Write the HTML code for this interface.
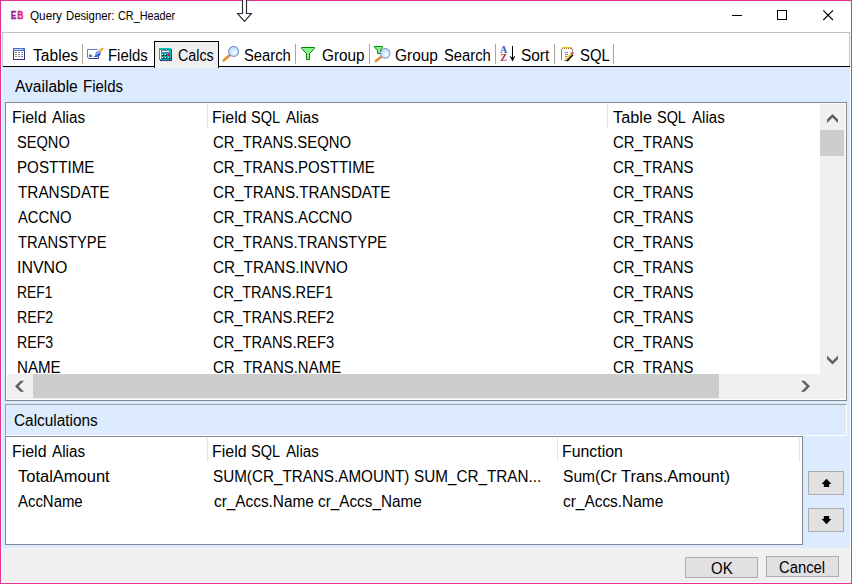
<!DOCTYPE html>
<html><head><meta charset="utf-8"><title>Query Designer: CR_Header</title>
<style>
html,body{margin:0;padding:0;}
body{width:852px;height:584px;position:relative;overflow:hidden;background:#fff;font-family:"Liberation Sans",sans-serif;color:#000;}
.a{position:absolute;}
.t{position:absolute;white-space:nowrap;line-height:20px;transform-origin:0 50%;color:#000;}
.sep{position:absolute;top:44px;width:1px;height:20px;background:#aaa799;}
.btn{position:absolute;background:#e1e1e1;border:1px solid #adadad;box-sizing:border-box;}
.cd{position:absolute;width:1px;height:24px;background:#e5e5e5;}
</style></head><body>
<!-- frame -->
<div class="a" style="left:0;top:0;width:850px;height:582px;border:1px solid #e1348f;"></div>
<div class="a" style="left:1px;top:1px;width:848px;height:580px;border:1px solid #f6faf8;"></div>
<!-- tab panel -->
<div class="a" style="left:2px;top:32px;width:846px;height:34px;border:1px solid #c3c3c3;border-bottom:none;background:#fff;"></div>
<!-- content bg -->
<div class="a" style="left:2px;top:67px;width:848px;height:481px;background:#dcebfd;"></div>
<!-- bottom bar -->
<div class="a" style="left:2px;top:548px;width:848px;height:34px;background:#f0f0f0;"></div>
<!-- black tab line -->
<div class="a" style="left:3px;top:66px;width:847px;height:1px;background:#000;"></div>
<!-- active tab -->
<div class="a" style="left:154px;top:41px;width:63px;height:26px;border:1px solid #000;border-bottom:none;background:#f0f0f0;"></div>
<!-- tab separators -->
<div class="sep" style="left:82px"></div>
<div class="sep" style="left:295px"></div>
<div class="sep" style="left:369px"></div>
<div class="sep" style="left:495px"></div>
<div class="sep" style="left:554px"></div>
<div class="sep" style="left:613px"></div>

<!-- title icons -->
<svg class="a" style="left:0;top:0" width="852" height="70" viewBox="0 0 852 70">
 <defs>
  <linearGradient id="eb" x1="0" x2="1" y1="0" y2="0"><stop offset="0" stop-color="#7a1fa8"/><stop offset="1" stop-color="#b01c90"/></linearGradient>
  <linearGradient id="eb2" x1="0" x2="1" y1="0" y2="0"><stop offset="0" stop-color="#c01c84"/><stop offset="1" stop-color="#ee2266"/></linearGradient>
  <radialGradient id="lens" cx="0.6" cy="0.65" r="0.7"><stop offset="0" stop-color="#ffffff"/><stop offset="0.5" stop-color="#c9ecff"/><stop offset="1" stop-color="#a5d8fb"/></radialGradient>
 </defs>
 <!-- cursor arrow -->
 <path d="M242.5,-1 V13.5 H237.5 L244.5,21.3 L251.5,13.5 H246.5 V-1" fill="#fff" stroke="#2b2b38" stroke-width="1.15"/>
 <!-- window buttons -->
 <rect x="732" y="15" width="10" height="1" fill="#000"/>
 <rect x="777.5" y="10.5" width="9" height="9" fill="none" stroke="#000" stroke-width="1"/>
 <path d="M823.3,10.3 L833,20 M833,10.3 L823.3,20" stroke="#000" stroke-width="1.1" fill="none"/>
 <!-- EB -->
 <g font-family="Liberation Sans" font-weight="bold" font-size="10.5" stroke-width="0.3">
  <text x="10.7" y="19" fill="url(#eb)" stroke="url(#eb)" textLength="5.6" lengthAdjust="spacingAndGlyphs">E</text>
  <text x="17.3" y="19" fill="url(#eb2)" stroke="url(#eb2)" textLength="6.2" lengthAdjust="spacingAndGlyphs">B</text>
 </g>

 <!-- Tables icon -->
 <g>
  <rect x="13" y="48" width="12" height="12" fill="#31307e"/>
  <rect x="13" y="48" width="12" height="3" fill="#4a72c8"/>
  <rect x="14" y="49" width="9" height="1" fill="#c8d8f4"/>
  <rect x="14" y="51" width="10" height="8" fill="#fff"/>
  <g fill="#8a8a8a"><rect x="15" y="52" width="2" height="1"/><rect x="18" y="52" width="2" height="1"/><rect x="21" y="52" width="2" height="1"/>
  <rect x="15" y="54" width="2" height="1"/><rect x="18" y="54" width="2" height="1" fill="#6a9a9a"/><rect x="21" y="54" width="2" height="1" fill="#6a9a9a"/>
  <rect x="15" y="56" width="2" height="1"/><rect x="18" y="56" width="2" height="1" fill="#6a9a9a"/><rect x="21" y="56" width="2" height="1" fill="#7a78b8"/></g>
 </g>
 <!-- Fields icon -->
 <g>
  <path d="M97.5,49.5 H87.5 V57.5 H88.5" fill="none" stroke="#5b7fd0" stroke-width="1"/>
  <path d="M88.5,58.5 H98.5 V56.5" fill="none" stroke="#3a3a8c" stroke-width="1"/>
  <rect x="89" y="54" width="2" height="1" fill="#7ccf7c"/>
  <rect x="89" y="55" width="3" height="2" fill="#4a78d8"/>
  <path d="M92.5,56.5 C95,56.8 96,55 95.5,53.5 C96,51.5 98.5,50.5 100,52 C101.5,53.5 100.5,56 98,56.8 C96,57.2 94,57 92.5,56.5Z" fill="#3a5fd4"/>
  <path d="M96.5,54.5 C97,53 98.5,52 99.5,52.8" stroke="#a8d4f4" stroke-width="1.2" fill="none"/>
  <path d="M99.9,51.6 L102.5,48.5" stroke="#e8a010" stroke-width="1.9" stroke-linecap="round"/>
  <path d="M98.4,50.4 L100.4,48.2" stroke="#9a6a3a" stroke-width="0.8" stroke-dasharray="0.8,0.6"/>
 </g>
 <!-- Calcs icon -->
 <g>
  <rect x="160" y="49" width="12" height="12" fill="#35358a"/>
  <rect x="159" y="48" width="12" height="12" fill="#08b5b5"/>
  <rect x="160" y="50" width="1" height="9" fill="#fff"/>
  <rect x="161" y="50" width="7" height="1" fill="#8a7a7a"/>
  <rect x="162" y="51" width="7" height="1" fill="#fff"/>
  <rect x="162" y="52" width="7" height="1" fill="#5a6ad0"/>
  <g fill="#111"><rect x="162.5" y="54.5" width="1.6" height="1.6"/><rect x="165.5" y="54.5" width="1.6" height="1.6"/>
  <rect x="162.5" y="57.5" width="1.6" height="1.6"/><rect x="165.5" y="57.5" width="1.6" height="1.6"/><rect x="168.5" y="57.5" width="1.6" height="1.6"/></g>
  <g fill="#fff"><rect x="162" y="54" width="1" height="1"/><rect x="165" y="54" width="1" height="1"/><rect x="162" y="57" width="1" height="1"/><rect x="165" y="57" width="1" height="1"/><rect x="168" y="57" width="1" height="1"/></g>
  <rect x="168" y="54" width="2" height="2" fill="#f00"/>
 </g>
 <!-- Search icon -->
 <g>
  <path d="M229.6,55.6 L223.8,60.6" stroke="#9a9ac8" stroke-width="2.6" stroke-linecap="round" opacity="0.6"/>
  <path d="M229.4,55.4 L223.7,60.3" stroke="#f08a24" stroke-width="2.3" stroke-linecap="round"/>
  <circle cx="233.6" cy="51.4" r="5" fill="url(#lens)" stroke="#8494cf" stroke-width="1.1"/>
 </g>
 <!-- Group (funnel) -->
 <path d="M301.5,47.5 H314.5 V48.5 L309.5,53.5 V59.5 H306.5 V53.5 L301.5,48.5 Z" fill="#8af08a" stroke="#008a00" stroke-width="1" stroke-linejoin="miter"/>
 <!-- Group Search icon -->
 <g>
  <path d="M374.5,46.5 H382.5 V47.5 L380.5,49.8 V53.5 H377.5 V49.8 L374.5,47.5 Z" fill="#8af08a" stroke="#008a00" stroke-width="1"/>
  <path d="M380.8,57.3 L375.8,61.3" stroke="#9a9ac8" stroke-width="2.4" stroke-linecap="round" opacity="0.6"/>
  <path d="M380.4,57.3 L375.8,61.1" stroke="#f08a24" stroke-width="2.2" stroke-linecap="round"/>
  <circle cx="385.2" cy="53.3" r="4.8" fill="url(#lens)" stroke="#8494cf" stroke-width="1.1"/>
 </g>
 <!-- Sort icon -->
 <g>
  <text x="500" y="52.8" font-family="Liberation Serif" font-weight="bold" font-size="10" fill="#3a5cc0">A</text>
  <text x="500.2" y="61" font-family="Liberation Serif" font-weight="bold" font-size="10" fill="#a83a3a">Z</text>
  <path d="M512.5,46 V60" stroke="#000" stroke-width="1"/>
  <path d="M510.1,56.2 L512.5,61.2 L514.9,56.2 L512.5,58 Z" fill="#000" stroke="#000" stroke-width="0.4"/>
 </g>
 <!-- SQL icon -->
 <g>
  <rect x="562" y="48" width="10" height="12" fill="#fff"/>
  <rect x="561" y="49" width="1" height="11" fill="#7878d0"/>
  <rect x="572" y="49" width="1" height="4" fill="#8a8a8a"/>
  <rect x="562" y="47" width="10" height="1" fill="#e8c020"/>
  <rect x="562" y="48" width="10" height="1" fill="#a86a30"/>
  <g fill="#fff"><rect x="563" y="48" width="1" height="1"/><rect x="565" y="48" width="1" height="1"/><rect x="567" y="48" width="1" height="1"/><rect x="569" y="48" width="1" height="1"/></g>
  <g fill="#8a8a8a"><rect x="565" y="52" width="3" height="1"/><rect x="565" y="54" width="3" height="1"/><rect x="565" y="56" width="2" height="1"/></g>
  <path d="M564,60.5 L570,60.5" stroke="#9a9a9a" stroke-width="1"/>
  <path d="M566.3,61 L572.8,54.5" stroke="#000" stroke-width="2.2" />
  <path d="M565.3,60 L571.8,53.5" stroke="#ecd040" stroke-width="2"/>
  <path d="M571.2,54.2 L573.2,52.2" stroke="#e05a6a" stroke-width="2.6"/>
 </g>
</svg>

<!-- list 1 -->
<div class="a" style="left:5px;top:102px;width:840px;height:297px;border:1px solid #828790;background:#fff;"></div>
<div class="a" style="left:6px;top:103px;width:814px;height:271px;overflow:hidden;">
<span class="t" style="left:10.96px;top:30.16px;font-size:16px;transform:scaleX(0.9130)">SEQNO</span>
<span class="t" style="left:207.29px;top:30.16px;font-size:16px;transform:scaleX(0.9302)">CR_TRANS.SEQNO</span>
<span class="t" style="left:607.04px;top:30.16px;font-size:16px;transform:scaleX(0.9316)">CR_TRANS</span>
<span class="t" style="left:10.51px;top:55.16px;font-size:16px;transform:scaleX(0.9467)">POSTTIME</span>
<span class="t" style="left:207.03px;top:55.16px;font-size:16px;transform:scaleX(0.9380)">CR_TRANS.POSTTIME</span>
<span class="t" style="left:607.04px;top:55.16px;font-size:16px;transform:scaleX(0.9316)">CR_TRANS</span>
<span class="t" style="left:11.87px;top:80.16px;font-size:16px;transform:scaleX(0.9565)">TRANSDATE</span>
<span class="t" style="left:207.34px;top:80.16px;font-size:16px;transform:scaleX(0.9515)">CR_TRANS.TRANSDATE</span>
<span class="t" style="left:607.04px;top:80.16px;font-size:16px;transform:scaleX(0.9316)">CR_TRANS</span>
<span class="t" style="left:11.51px;top:105.16px;font-size:16px;transform:scaleX(0.9252)">ACCNO</span>
<span class="t" style="left:207.03px;top:105.16px;font-size:16px;transform:scaleX(0.9369)">CR_TRANS.ACCNO</span>
<span class="t" style="left:607.04px;top:105.16px;font-size:16px;transform:scaleX(0.9316)">CR_TRANS</span>
<span class="t" style="left:11.84px;top:130.16px;font-size:16px;transform:scaleX(0.9221)">TRANSTYPE</span>
<span class="t" style="left:207.44px;top:130.16px;font-size:16px;transform:scaleX(0.9322)">CR_TRANS.TRANSTYPE</span>
<span class="t" style="left:607.04px;top:130.16px;font-size:16px;transform:scaleX(0.9316)">CR_TRANS</span>
<span class="t" style="left:10.97px;top:155.16px;font-size:16px;transform:scaleX(0.9958)">INVNO</span>
<span class="t" style="left:207.44px;top:155.16px;font-size:16px;transform:scaleX(0.9546)">CR_TRANS.INVNO</span>
<span class="t" style="left:607.04px;top:155.16px;font-size:16px;transform:scaleX(0.9316)">CR_TRANS</span>
<span class="t" style="left:10.51px;top:180.16px;font-size:16px;transform:scaleX(0.8668)">REF1</span>
<span class="t" style="left:207.03px;top:180.16px;font-size:16px;transform:scaleX(0.9111)">CR_TRANS.REF1</span>
<span class="t" style="left:607.04px;top:180.16px;font-size:16px;transform:scaleX(0.9316)">CR_TRANS</span>
<span class="t" style="left:11.04px;top:205.16px;font-size:16px;transform:scaleX(0.8862)">REF2</span>
<span class="t" style="left:207.03px;top:205.16px;font-size:16px;transform:scaleX(0.9209)">CR_TRANS.REF2</span>
<span class="t" style="left:607.04px;top:205.16px;font-size:16px;transform:scaleX(0.9316)">CR_TRANS</span>
<span class="t" style="left:11.22px;top:230.16px;font-size:16px;transform:scaleX(0.8837)">REF3</span>
<span class="t" style="left:207.03px;top:230.16px;font-size:16px;transform:scaleX(0.9205)">CR_TRANS.REF3</span>
<span class="t" style="left:607.04px;top:230.16px;font-size:16px;transform:scaleX(0.9316)">CR_TRANS</span>
<span class="t" style="left:11.05px;top:255.16px;font-size:16px;transform:scaleX(0.9450)">NAME</span>
<span class="t" style="left:207.37px;top:255.16px;font-size:16px;transform:scaleX(0.9358)">CR_TRANS.NAME</span>
<span class="t" style="left:607.04px;top:255.16px;font-size:16px;transform:scaleX(0.9316)">CR_TRANS</span>
</div>
<div class="cd" style="left:207px;top:104px"></div>
<div class="cd" style="left:607px;top:104px"></div>
<!-- v scrollbar -->
<div class="a" style="left:820px;top:104px;width:25px;height:295px;background:#f0f0f0;"></div>
<div class="a" style="left:820px;top:130px;width:24px;height:26px;background:#cdcdcd;"></div>
<!-- h scrollbar -->
<div class="a" style="left:7px;top:374px;width:813px;height:25px;background:#f0f0f0;"></div>
<div class="a" style="left:33px;top:374px;width:686px;height:24px;background:#cdcdcd;"></div>
<svg class="a" style="left:0;top:100px" width="852" height="300" viewBox="0 100 852 300">
 <path d="M827,119.5 L832.5,114 L838,119.5 V123 L832.5,117.5 L827,123 Z" fill="#606060"/>
 <path d="M827,359 L832.5,364.5 L838,359 V355.5 L832.5,361 L827,355.5 Z" fill="#606060"/>
 <path d="M15,386.3 L20.5,380.8 H24 L18.5,386.3 L24,391.8 H20.5 Z" fill="#606060"/>
 <path d="M810,386.3 L804.5,380.8 H801 L806.5,386.3 L801,391.8 H804.5 Z" fill="#606060"/>
</svg>

<!-- Calculations panel bevel -->
<div class="a" style="left:5px;top:404px;width:841px;height:31px;border-top:1px solid #a0a0a0;border-left:1px solid #a0a0a0;border-right:1px solid #fff;border-bottom:1px solid #fff;box-sizing:border-box;width:842px;height:32px;"></div>

<!-- list 2 -->
<div class="a" style="left:5px;top:436px;width:796px;height:107px;border:1px solid #828790;background:#fff;"></div>
<div class="cd" style="left:207px;top:438px"></div>
<div class="cd" style="left:557px;top:438px"></div>
<div class="cd" style="left:799px;top:438px"></div>

<!-- up/down buttons -->
<div class="btn" style="left:808px;top:471px;width:36px;height:24px;"></div>
<div class="btn" style="left:808px;top:508px;width:36px;height:24px;"></div>
<svg class="a" style="left:808px;top:471px" width="36" height="61" viewBox="808 471 36 61">
 <path d="M826.5,478.8 L831.4,484 H829.2 V487 H823.8 V484 H821.6 Z" fill="#000"/>
 <path d="M826.5,524.3 L831.4,519 H829.2 V516 H823.8 V519 H821.6 Z" fill="#000"/>
</svg>

<!-- OK / Cancel -->
<div class="btn" style="left:685px;top:557px;width:73px;height:21px;"></div>
<div class="btn" style="left:766px;top:556px;width:73px;height:21px;"></div>

<span class="t" style="left:30.02px;top:6.34px;font-size:12px;transform:scaleX(0.9765)">Query</span>
<span class="t" style="left:66.35px;top:6.34px;font-size:12px;transform:scaleX(0.9418)">Designer:</span>
<span class="t" style="left:117.95px;top:6.34px;font-size:12px;transform:scaleX(0.9032)">CR_Header</span>
<span class="t" style="left:32.81px;top:45.86px;font-size:16px;transform:scaleX(0.9754)">Tables</span>
<span class="t" style="left:107.64px;top:45.86px;font-size:16px;transform:scaleX(0.9322)">Fields</span>
<span class="t" style="left:178.30px;top:45.86px;font-size:16px;transform:scaleX(0.8921)">Calcs</span>
<span class="t" style="left:243.93px;top:45.86px;font-size:16px;transform:scaleX(0.9238)">Search</span>
<span class="t" style="left:321.73px;top:45.86px;font-size:16px;transform:scaleX(0.9584)">Group</span>
<span class="t" style="left:394.63px;top:45.86px;font-size:16px;transform:scaleX(0.9645)">Group</span>
<span class="t" style="left:443.77px;top:45.86px;font-size:16px;transform:scaleX(0.9232)">Search</span>
<span class="t" style="left:520.94px;top:45.86px;font-size:16px;transform:scaleX(0.9628)">Sort</span>
<span class="t" style="left:580.14px;top:45.86px;font-size:16px;transform:scaleX(0.9273)">SQL</span>
<span class="t" style="left:14.77px;top:76.66px;font-size:16px;transform:scaleX(0.9709)">Available</span>
<span class="t" style="left:82.91px;top:76.66px;font-size:16px;transform:scaleX(0.9390)">Fields</span>
<span class="t" style="left:13.83px;top:411.06px;font-size:16px;transform:scaleX(0.9608)">Calculations</span>
<span class="t" style="left:12.34px;top:108.36px;font-size:16px;transform:scaleX(0.9949)">Field</span>
<span class="t" style="left:52.11px;top:108.36px;font-size:16px;transform:scaleX(0.9546)">Alias</span>
<span class="t" style="left:212.32px;top:108.36px;font-size:16px;transform:scaleX(0.9966)">Field</span>
<span class="t" style="left:251.39px;top:108.36px;font-size:16px;transform:scaleX(0.9068)">SQL</span>
<span class="t" style="left:285.82px;top:108.36px;font-size:16px;transform:scaleX(0.9469)">Alias</span>
<span class="t" style="left:613.17px;top:108.36px;font-size:16px;transform:scaleX(1.0186)">Table</span>
<span class="t" style="left:657.37px;top:108.36px;font-size:16px;transform:scaleX(0.9022)">SQL</span>
<span class="t" style="left:692.45px;top:108.36px;font-size:16px;transform:scaleX(0.9419)">Alias</span>
<span class="t" style="left:12.34px;top:442.26px;font-size:16px;transform:scaleX(0.9949)">Field</span>
<span class="t" style="left:52.11px;top:442.26px;font-size:16px;transform:scaleX(0.9546)">Alias</span>
<span class="t" style="left:212.32px;top:442.26px;font-size:16px;transform:scaleX(0.9966)">Field</span>
<span class="t" style="left:251.39px;top:442.26px;font-size:16px;transform:scaleX(0.9068)">SQL</span>
<span class="t" style="left:285.82px;top:442.26px;font-size:16px;transform:scaleX(0.9469)">Alias</span>
<span class="t" style="left:562.11px;top:442.26px;font-size:16px;transform:scaleX(0.9921)">Function</span>
<span class="t" style="left:17.77px;top:467.16px;font-size:16px;transform:scaleX(1.0311)">TotalAmount</span>
<span class="t" style="left:213.09px;top:467.16px;font-size:16px;transform:scaleX(0.9518)">SUM(CR_TRANS.AMOUNT)</span>
<span class="t" style="left:413.71px;top:467.16px;font-size:16px;transform:scaleX(0.9534)">SUM_CR_TRAN...</span>
<span class="t" style="left:562.57px;top:467.16px;font-size:16px;transform:scaleX(0.9746)">Sum(Cr</span>
<span class="t" style="left:620.98px;top:467.16px;font-size:16px;transform:scaleX(1.0352)">Trans.Amount)</span>
<span class="t" style="left:17.78px;top:492.16px;font-size:16px;transform:scaleX(0.9321)">AccName</span>
<span class="t" style="left:213.54px;top:492.16px;font-size:16px;transform:scaleX(0.9595)">cr_Accs.Name</span>
<span class="t" style="left:317.74px;top:492.16px;font-size:16px;transform:scaleX(0.9565)">cr_Accs_Name</span>
<span class="t" style="left:563.34px;top:492.16px;font-size:16px;transform:scaleX(0.9634)">cr_Accs.Name</span>
<span class="t" style="left:711.06px;top:559.16px;font-size:16px;transform:scaleX(0.9387)">OK</span>
<span class="t" style="left:779.31px;top:558.16px;font-size:16px;transform:scaleX(0.9258)">Cancel</span>
</body></html>
